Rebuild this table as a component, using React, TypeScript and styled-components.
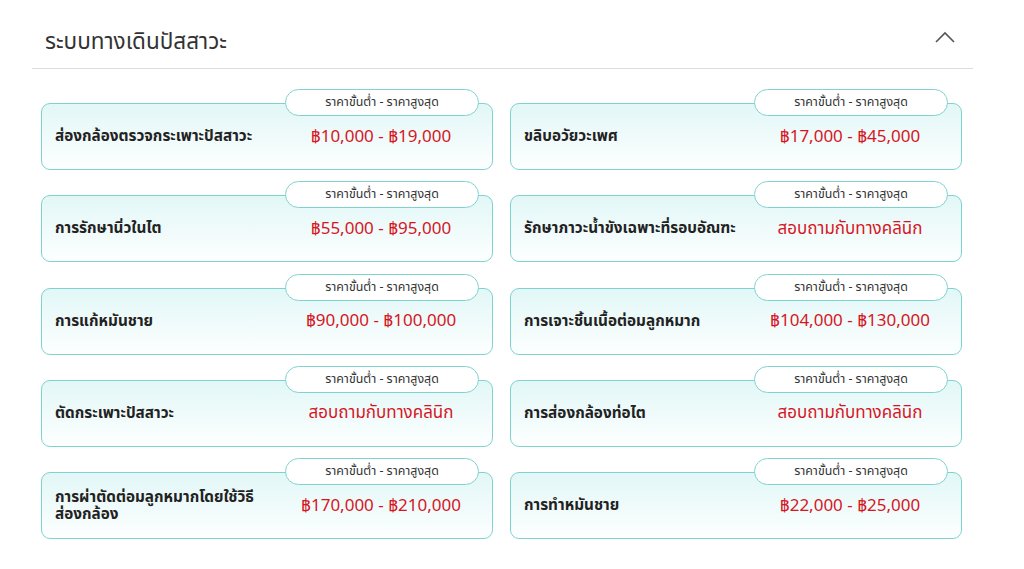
import React from 'react';
import styled, { createGlobalStyle } from 'styled-components';

interface PriceItem {
  name: string;
  price: string;
}

const items: PriceItem[] = [
  { name: 'ส่องกล้องตรวจกระเพาะปัสสาวะ', price: '฿10,000 - ฿19,000' },
  { name: 'ขลิบอวัยวะเพศ', price: '฿17,000 - ฿45,000' },
  { name: 'การรักษานิ่วในไต', price: '฿55,000 - ฿95,000' },
  { name: 'รักษาภาวะน้ำขังเฉพาะที่รอบอัณฑะ', price: 'สอบถามกับทางคลินิก' },
  { name: 'การแก้หมันชาย', price: '฿90,000 - ฿100,000' },
  { name: 'การเจาะชิ้นเนื้อต่อมลูกหมาก', price: '฿104,000 - ฿130,000' },
  { name: 'ตัดกระเพาะปัสสาวะ', price: 'สอบถามกับทางคลินิก' },
  { name: 'การส่องกล้องท่อไต', price: 'สอบถามกับทางคลินิก' },
  { name: 'การผ่าตัดต่อมลูกหมากโดยใช้วิธีส่องกล้อง', price: '฿170,000 - ฿210,000' },
  { name: 'การทำหมันชาย', price: '฿22,000 - ฿25,000' },
];

const GlobalStyle = createGlobalStyle`
  body {
    margin: 0;
    background: #fff;
    font-family: "Noto Sans Thai", "Noto Sans", "Liberation Sans", sans-serif;
  }
`;

const Section = styled.section`
  width: 941px;
  margin-left: 32px;
`;

const Header = styled.div`
  display: flex;
  align-items: center;
  justify-content: space-between;
  height: 56px;
  padding: 12px 18px 0 13px;
  border-bottom: 1px solid #dcdcdc;
`;

const Title = styled.h2`
  margin: 4px 0 0;
  font-size: 22.5px;
  font-weight: 400;
  color: #333;
`;

const Chevron = styled.svg`
  width: 20px;
  height: 12px;
  margin-top: -6px;
`;

const Grid = styled.div`
  display: grid;
  grid-template-columns: 1fr 1fr;
  column-gap: 17px;
  row-gap: 11.25px;
  padding: 20px 11px 0 9px;
`;

const Item = styled.div`
  position: relative;
  padding-top: 14px;
`;

const Badge = styled.div`
  position: absolute;
  top: 0;
  right: 14px;
  width: 194px;
  height: 27px;
  box-sizing: border-box;
  display: flex;
  align-items: center;
  justify-content: center;
  background: #fff;
  border: 1px solid #7fd3cf;
  border-radius: 14px;
  font-size: 12.4px;
  color: #333;
  z-index: 1;
`;

const Card = styled.div`
  display: flex;
  align-items: center;
  height: 67px;
  box-sizing: border-box;
  padding: 0 14px 0 13px;
  border: 1px solid #7fd3cf;
  border-radius: 9px;
  background: linear-gradient(180deg, #e2f7f7 0%, #f5fcfc 70%, #fdffff 100%);
`;

const Name = styled.div`
  flex: 1;
  padding-right: 6px;
  font-size: 15.3px;
  font-weight: 700;
  line-height: 17px;
  color: #222;
`;

const Price = styled.div`
  width: 194px;
  text-align: center;
  font-size: 17px;
  color: #d6161f;
  white-space: nowrap;
`;

function PriceCard({ name, price }: PriceItem) {
  return (
    <Item>
      <Badge>ราคาขั้นต่ำ - ราคาสูงสุด</Badge>
      <Card>
        <Name>{name}</Name>
        <Price>{price}</Price>
      </Card>
    </Item>
  );
}

export default function App() {
  return (
    <>
      <GlobalStyle />
      <Section>
        <Header>
          <Title>ระบบทางเดินปัสสาวะ</Title>
          <Chevron viewBox="0 0 20 12">
            <path d="M1 11 L10 2 L19 11" fill="none" stroke="#555" strokeWidth="1.6" />
          </Chevron>
        </Header>
        <Grid>
          {items.map((it) => (
            <PriceCard key={it.name} {...it} />
          ))}
        </Grid>
      </Section>
    </>
  );
}
